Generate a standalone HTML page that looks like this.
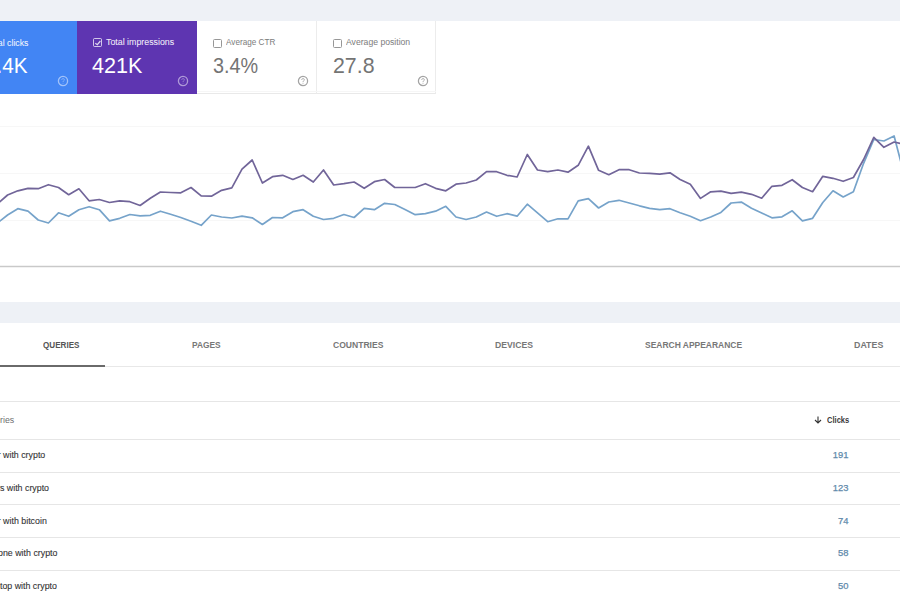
<!DOCTYPE html>
<html><head><meta charset="utf-8">
<style>
*{margin:0;padding:0;box-sizing:border-box}
html,body{width:900px;height:600px;overflow:hidden;background:#fff}
body{position:relative;font-family:"Liberation Sans",sans-serif}
.abs{position:absolute;white-space:nowrap}
.band{position:absolute;left:0;width:900px;background:#eef1f6}
.card{position:absolute;top:21px;height:73px}
.lbl{position:absolute;font-size:9.2px;line-height:11px;transform-origin:0 0}
.val{position:absolute;font-size:22px;line-height:24px;transform-origin:0 0}
.cb{position:absolute;width:9px;height:9px;border:1px solid;border-radius:1.5px}
.q{position:absolute;width:11px;height:11px;border:1px solid;border-radius:50%;font-size:8px;line-height:9px;text-align:center;font-weight:bold}
.tab{position:absolute;top:340px;transform-origin:0 0;font-size:9.8px;line-height:10px;font-weight:bold;color:#777}
.row{position:absolute;left:0;width:900px;height:1px;background:#e6e6e6}
.q1{position:absolute;font-size:9.3px;color:#333;-webkit-text-stroke:0.1px #333;line-height:11px;transform:scaleX(0.95);transform-origin:100% 0}
.num{position:absolute;font-size:9.4px;color:#5f8aab;-webkit-text-stroke:0.25px #5f8aab;line-height:11px;text-align:right;right:51.5px}
</style></head><body>
<div class="band" style="top:0;height:20.6px"></div>
<!-- cards -->
<div class="card" style="left:-43px;width:120px;background:#4285f4"></div>
<div class="card" style="left:77px;width:120px;background:#5e35b1"></div>
<div class="card" style="left:197px;width:120px;background:#fff;border-right:1px solid #ececec;border-bottom:1px solid #e9e9e9"></div>
<div class="card" style="left:317px;width:119px;background:#fff;border-right:1px solid #ececec;border-bottom:1px solid #e9e9e9"></div>

<div class="lbl abs" style="right:871.5px;top:37.5px;color:rgba(255,255,255,0.9);-webkit-text-stroke:0.15px rgba(255,255,255,0.6);transform:scaleX(0.95);transform-origin:100% 0">Total clicks</div>
<div class="val abs" style="right:872.5px;top:53.5px;color:#fff;transform:scaleX(0.94);transform-origin:100% 0">14.4K</div>
<svg class="abs" style="left:55.7px;top:73.8px" width="14" height="14" viewBox="0 0 14 14"><circle cx="7" cy="7" r="4.6" fill="none" stroke="rgba(255,255,255,0.5)" stroke-width="1.3"/><path d="M5.6 5.9 Q5.7 4.6 7 4.6 Q8.4 4.6 8.4 5.8 Q8.4 6.6 7.4 7.1 Q7 7.4 7 8.1" fill="none" stroke="rgba(255,255,255,0.35)" stroke-width="0.9"/><circle cx="7" cy="9.3" r="0.5" fill="rgba(255,255,255,0.35)"/></svg>

<div class="cb" style="left:92.5px;top:38.4px;border:1.2px solid rgba(255,255,255,0.72)"></div>
<svg class="abs" style="left:92.5px;top:38.4px" width="10" height="10"><path d="M2.3 5.3 L4.3 6.7 L7.4 3" fill="none" stroke="rgba(255,255,255,0.8)" stroke-width="1.2"/></svg>
<div class="lbl abs" style="left:105.5px;top:37.2px;color:rgba(255,255,255,0.9);-webkit-text-stroke:0.15px rgba(255,255,255,0.6);transform:scaleX(0.96)">Total impressions</div>
<div class="val abs" style="left:92px;top:53.6px;color:#fff;transform:scaleX(0.98)">421K</div>
<svg class="abs" style="left:175.7px;top:73.8px" width="14" height="14" viewBox="0 0 14 14"><circle cx="7" cy="7" r="4.6" fill="none" stroke="rgba(255,255,255,0.5)" stroke-width="1.3"/><path d="M5.6 5.9 Q5.7 4.6 7 4.6 Q8.4 4.6 8.4 5.8 Q8.4 6.6 7.4 7.1 Q7 7.4 7 8.1" fill="none" stroke="rgba(255,255,255,0.35)" stroke-width="0.9"/><circle cx="7" cy="9.3" r="0.5" fill="rgba(255,255,255,0.35)"/></svg>

<div class="cb" style="left:213px;top:38.8px;border-color:#979797"></div>
<div class="lbl abs" style="left:225.5px;top:37.2px;color:#7c7c7c;transform:scaleX(0.89)">Average CTR</div>
<div class="val abs" style="left:212.8px;top:53.6px;color:#747474;transform:scaleX(0.90)">3.4%</div>
<svg class="abs" style="left:295.9px;top:73.8px" width="14" height="14" viewBox="0 0 14 14"><circle cx="7" cy="7" r="4.6" fill="none" stroke="#a3a3a3" stroke-width="1.25"/><path d="M5.6 5.9 Q5.7 4.6 7 4.6 Q8.4 4.6 8.4 5.8 Q8.4 6.6 7.4 7.1 Q7 7.4 7 8.1" fill="none" stroke="#a8a8a8" stroke-width="0.9"/><circle cx="7" cy="9.3" r="0.5" fill="#a8a8a8"/></svg>

<div class="cb" style="left:333px;top:38.8px;border-color:#979797"></div>
<div class="lbl abs" style="left:345.5px;top:37.2px;color:#7c7c7c;transform:scaleX(0.94)">Average position</div>
<div class="val abs" style="left:332.6px;top:53.6px;color:#747474;transform:scaleX(0.97)">27.8</div>
<svg class="abs" style="left:415.9px;top:73.8px" width="14" height="14" viewBox="0 0 14 14"><circle cx="7" cy="7" r="4.6" fill="none" stroke="#a3a3a3" stroke-width="1.25"/><path d="M5.6 5.9 Q5.7 4.6 7 4.6 Q8.4 4.6 8.4 5.8 Q8.4 6.6 7.4 7.1 Q7 7.4 7 8.1" fill="none" stroke="#a8a8a8" stroke-width="0.9"/><circle cx="7" cy="9.3" r="0.5" fill="#a8a8a8"/></svg>

<div class="abs" style="left:197px;top:91px;width:239px;height:1px;background:#f6f6f6"></div>
<!-- chart -->
<svg class="abs" style="left:0;top:0" width="900" height="300">
<line x1="0" y1="126.5" x2="900" y2="126.5" stroke="#f7f7f7" stroke-width="1"/>
<line x1="0" y1="173.5" x2="900" y2="173.5" stroke="#f7f7f7" stroke-width="1"/>
<line x1="0" y1="220.5" x2="900" y2="220.5" stroke="#f7f7f7" stroke-width="1"/>
<line x1="0" y1="266.5" x2="900" y2="266.5" stroke="#c9c9c9" stroke-width="1.3"/>
<polyline points="-2.6,223.0 7.6,215.0 17.8,208.7 28.0,211.2 38.2,220.0 48.4,223.0 58.5,212.8 68.7,216.3 78.9,209.7 89.1,206.7 99.3,209.7 109.5,220.8 119.7,218.3 129.9,214.5 140.1,215.8 150.3,215.3 160.4,211.2 170.6,214.2 180.8,217.5 191.0,221.3 201.2,225.3 211.4,215.0 221.6,217.0 231.8,218.0 242.0,216.2 252.2,217.8 262.4,224.5 272.5,217.5 282.7,217.8 292.9,211.7 303.1,209.7 313.3,216.3 323.5,219.5 333.7,218.3 343.9,214.5 354.1,217.5 364.2,208.3 374.4,209.7 384.6,203.3 394.8,204.5 405.0,209.5 415.2,214.7 425.4,213.7 435.6,211.2 445.8,206.3 456.0,217.0 466.1,219.5 476.3,217.0 486.5,212.0 496.7,216.3 506.9,213.7 517.1,216.2 527.3,204.2 537.5,212.8 547.7,221.7 557.9,218.8 568.0,218.8 578.2,200.8 588.4,198.7 598.6,208.0 608.8,202.0 619.0,200.3 629.2,203.0 639.4,205.8 649.6,208.3 659.8,209.7 670.0,208.7 680.1,212.8 690.3,216.2 700.5,220.7 710.7,217.0 720.9,212.4 731.1,203.0 741.3,202.1 751.5,208.2 761.7,213.0 771.9,217.8 782.0,216.8 792.2,210.8 802.4,220.8 812.6,218.3 822.8,202.5 833.0,190.8 843.2,197.0 853.4,191.7 863.6,163.3 873.8,139.5 883.9,141.0 894.1,136.0 904.3,175.0" fill="none" stroke="#76a3ca" stroke-width="1.7" stroke-linejoin="round"/>
<polyline points="-2.6,204.0 7.6,195.0 17.8,190.8 28.0,188.3 38.2,188.7 48.4,184.7 58.5,187.5 68.7,194.7 78.9,188.8 89.1,200.8 99.3,199.5 109.5,202.5 119.7,200.8 129.9,201.7 140.1,205.5 150.3,198.3 160.4,192.0 170.6,192.5 180.8,192.8 191.0,187.5 201.2,195.8 211.4,196.2 221.6,190.3 231.8,187.8 242.0,169.2 252.2,160.0 262.4,183.0 272.5,176.7 282.7,175.3 292.9,179.5 303.1,175.3 313.3,182.0 323.5,170.0 333.7,185.0 343.9,183.7 354.1,182.0 364.2,188.3 374.4,181.7 384.6,179.5 394.8,187.5 405.0,187.5 415.2,187.5 425.4,183.7 435.6,188.3 445.8,190.8 456.0,184.2 466.1,183.0 476.3,180.0 486.5,171.7 496.7,171.7 506.9,175.3 517.1,177.0 527.3,154.5 537.5,170.0 547.7,171.7 557.9,170.0 568.0,172.2 578.2,165.3 588.4,146.2 598.6,170.3 608.8,174.7 619.0,169.7 629.2,169.7 639.4,173.0 649.6,173.3 659.8,174.2 670.0,172.8 680.1,179.5 690.3,184.2 700.5,198.4 710.7,191.8 720.9,191.2 731.1,193.4 741.3,192.2 751.5,194.3 761.7,198.2 771.9,186.3 782.0,185.3 792.2,179.7 802.4,187.5 812.6,191.7 822.8,176.3 833.0,178.3 843.2,181.3 853.4,177.5 863.6,159.5 873.8,137.3 883.9,147.3 894.1,142.0 904.3,144.5" fill="none" stroke="#716599" stroke-width="1.7" stroke-linejoin="round"/>
</svg>

<div class="band" style="top:302px;height:21px"></div>

<!-- tabs -->
<div class="tab abs" style="left:43px;color:#555;transform:scaleX(0.826)">QUERIES</div>
<div class="tab abs" style="left:192px;transform:scaleX(0.854)">PAGES</div>
<div class="tab abs" style="left:333px;transform:scaleX(0.873)">COUNTRIES</div>
<div class="tab abs" style="left:495px;transform:scaleX(0.883)">DEVICES</div>
<div class="tab abs" style="left:644.5px;transform:scaleX(0.864)">SEARCH APPEARANCE</div>
<div class="tab abs" style="left:854px;transform:scaleX(0.902)">DATES</div>
<div class="abs" style="left:0;top:365.5px;width:900px;height:1px;background:#e8e8e8"></div>
<div class="abs" style="left:0;top:364.6px;width:104.5px;height:2px;background:#6a6a6a"></div>

<div class="row" style="top:401px"></div>
<div class="abs" style="right:885.8px;top:415px;font-size:8.8px;color:#6e6e6e;line-height:10px">Queries</div>
<svg class="abs" style="left:814px;top:416px" width="8" height="8"><path d="M4 0.5 V7 M1 4 L4 7 L7 4" fill="none" stroke="#333" stroke-width="1.1"/></svg>
<div class="abs" style="left:826.8px;top:416px;font-size:8.2px;font-weight:bold;color:#3a3a3a;line-height:10px;transform:scaleX(0.92);transform-origin:0 0">Clicks</div>

<div class="row" style="top:439px"></div>
<div class="q1 abs" style="right:855px;top:450.3px">buy a car with crypto</div>
<div class="num abs" style="top:449.1px">191</div>
<div class="row" style="top:472px"></div>
<div class="q1 abs" style="right:850.5px;top:483px">buy flowers with crypto</div>
<div class="num abs" style="top:481.9px">123</div>
<div class="row" style="top:504px"></div>
<div class="q1 abs" style="right:852.8px;top:515.7px">buy a car with bitcoin</div>
<div class="num abs" style="top:514.6px">74</div>
<div class="row" style="top:537px"></div>
<div class="q1 abs" style="right:842.6px;top:548.4px">buy phone with crypto</div>
<div class="num abs" style="top:547.3px">58</div>
<div class="row" style="top:569.5px"></div>
<div class="q1 abs" style="right:842.6px;top:581.1px">buy laptop with crypto</div>
<div class="num abs" style="top:580.1px">50</div>
</body></html>
